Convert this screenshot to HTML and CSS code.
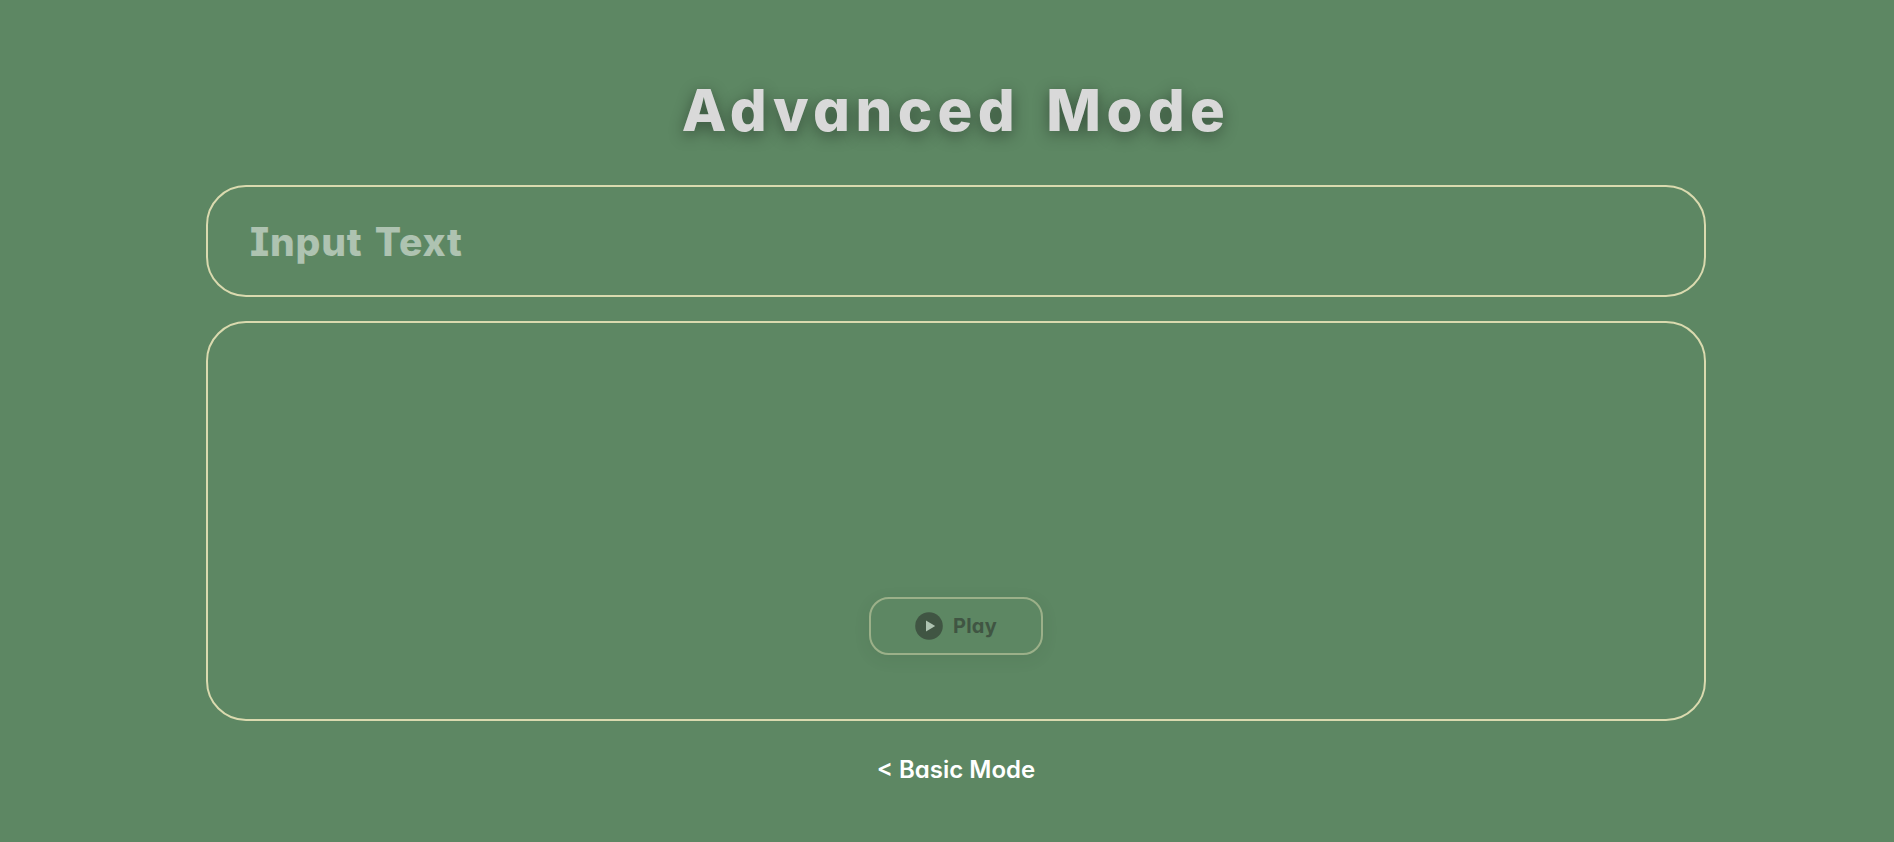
FILE: index.html
```html
<!DOCTYPE html>
<html lang="en">
<head>
<meta charset="utf-8">
<title>Advanced Mode</title>
<link rel="stylesheet" href="styles.css">
</head>
<body>
<main class="page">
  <h1 class="title">Advanced Mode</h1>
  <input class="text-input" type="text" placeholder="Input Text" aria-label="Input Text">
  <section class="panel">
    <button class="play" type="button" disabled>
      <svg class="play-icon" viewBox="0 0 28 28" aria-hidden="true"><circle cx="14" cy="14" r="13.8" fill="#242424"/><path d="M11 8.6 20.2 14 11 19.4z" fill="#fff"/></svg>
      <span class="play-label">Play</span>
    </button>
  </section>
  <a class="mode-link">&lt; Basic Mode</a>
</main>
</body>
</html>
```
FILE: styles.css
```css
* { box-sizing: border-box; }
body {
  margin: 0;
  background: #5d8763;
  font-family: Inter, Lato, sans-serif;
  font-feature-settings: "cv11" 1, "cv08" 1;
}
.page {
  width: 1500px;
  height: 842px;
  margin-left: 206px;
  padding-top: 74px;
  display: flex;
  flex-direction: column;
  align-items: center;
  overflow: hidden;
}
.title {
  margin: 0;
  height: 111px;
  line-height: 73px;
  font-size: 58px;
  font-weight: 800;
  letter-spacing: 5.4px;
  word-spacing: 8px;
  color: #d9d9d9;
  text-shadow: 0 4px 16px rgba(0, 0, 0, .4);
  white-space: nowrap;
}
.text-input {
  width: 1500px;
  height: 112px;
  padding: 0 42px;
  border: 2px solid #dadaaf;
  border-radius: 40px;
  background: transparent;
  color: #fff;
  font: inherit;
  font-feature-settings: inherit;
  font-size: 39px;
  font-weight: 800;
  letter-spacing: .8px;
  word-spacing: 3px;
}
.text-input::placeholder { color: rgba(255, 255, 255, .5); }
.panel {
  width: 1500px;
  height: 400px;
  margin-top: 24px;
  padding-bottom: 64px;
  display: flex;
  align-items: flex-end;
  justify-content: center;
  border: 2px solid #dadaaf;
  border-radius: 40px;
}
.play {
  width: 174px;
  height: 58px;
  padding: 0;
  display: flex;
  align-items: center;
  justify-content: center;
  gap: 10px;
  border: 2px solid #dadaaf;
  border-radius: 20px;
  background: transparent;
  box-shadow: 0 4px 16px rgba(0, 0, 0, .1);
  color: #242424;
  font: inherit;
  font-feature-settings: inherit;
  font-size: 20px;
  font-weight: 700;
  letter-spacing: .3px;
  opacity: .5;
}
.play-icon { width: 28px; height: 28px; }
.mode-link {
  margin-top: 33px;
  line-height: 32px;
  font-size: 24px;
  font-weight: 600;
  color: #fff;
  white-space: nowrap;
}
```
